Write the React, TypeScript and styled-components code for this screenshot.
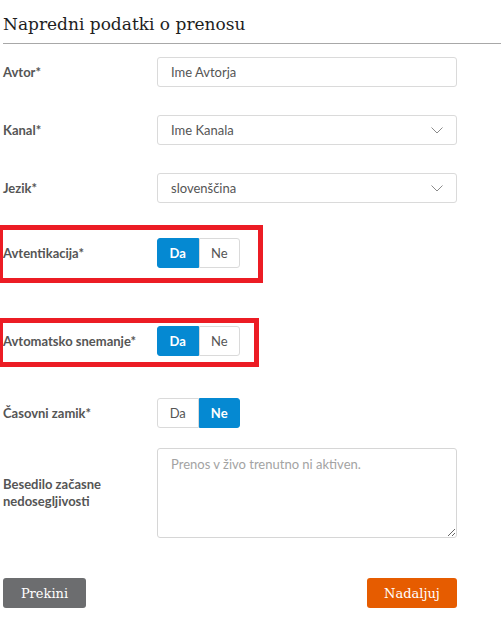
import React from 'react';
import styled, { createGlobalStyle } from 'styled-components';

const GlobalStyle = createGlobalStyle`
  body {
    margin: 0;
    background: #fff;
    font-family: "Lato", "Open Sans", sans-serif;
  }
`;

const Page = styled.div`
  padding: 14px 0 0 3px;
  width: 498px;
`;

const Title = styled.h2`
  margin: 0;
  padding-bottom: 9px;
  border-bottom: 1px solid #a8a8a8;
  font-family: "DejaVu Serif", "Liberation Serif", serif;
  font-weight: normal;
  font-size: 17px;
  line-height: 20px;
  color: #1e1e1e;
`;

const Form = styled.div`
  display: flex;
  flex-direction: column;
  padding-top: 13px;
`;

const Row = styled.div<{ $gap?: number }>`
  display: grid;
  grid-template-columns: 154px 300px;
  align-items: center;
  margin-top: ${(p) => p.$gap ?? 0}px;
`;

const Highlight = styled.div<{ $gap: number; $width: number; $pt: number; $pb: number }>`
  margin-top: ${(p) => p.$gap}px;
  margin-left: -3px;
  width: ${(p) => p.$width}px;
  box-sizing: border-box;
  border: 5px solid #ec1c24;
  border-left-width: 3px;
  padding: ${(p) => p.$pt}px 0 ${(p) => p.$pb}px 0;
`;

const Label = styled.label`
  font-weight: bold;
  font-size: 13px;
  line-height: 17px;
  color: #555;
`;

const TextInput = styled.div`
  height: 30px;
  box-sizing: border-box;
  border: 1px solid #dadada;
  border-radius: 3px;
  padding: 0 13px;
  display: flex;
  align-items: center;
  justify-content: space-between;
  font-size: 13px;
  color: #555;
`;

const Chevron = () => (
  <svg width="12" height="7" viewBox="0 0 12 7">
    <polyline points="0.5,0.5 6,6 11.5,0.5" fill="none" stroke="#8a8a8a" strokeWidth="1" />
  </svg>
);

const Toggle = styled.div`
  display: flex;
  width: 83px;
  height: 30px;
`;

const ToggleOption = styled.div<{ $active: boolean; $side: 'left' | 'right' }>`
  flex: 1;
  display: flex;
  align-items: center;
  justify-content: center;
  box-sizing: border-box;
  font-size: 13px;
  font-weight: ${(p) => (p.$active ? 'bold' : 'normal')};
  color: ${(p) => (p.$active ? '#fff' : '#555')};
  background: ${(p) => (p.$active ? '#0589d2' : '#fff')};
  border: 1px solid ${(p) => (p.$active ? '#0589d2' : '#dadada')};
  border-radius: ${(p) => (p.$side === 'left' ? '3px 0 0 3px' : '0 3px 3px 0')};
`;

const TextArea = styled.textarea`
  height: 90px;
  box-sizing: border-box;
  border: 1px solid #d6d6d6;
  border-radius: 3px;
  padding: 7px 13px;
  font-family: "Lato", sans-serif;
  font-size: 13px;
  color: #555;
  resize: vertical;
  &::placeholder {
    color: #a3a3a3;
  }
`;

const Footer = styled.div`
  display: flex;
  justify-content: space-between;
  width: 454px;
  margin-top: 40px;
`;

const Button = styled.button<{ $variant: 'cancel' | 'go' }>`
  height: 30px;
  width: ${(p) => (p.$variant === 'go' ? 90 : 83)}px;
  border: none;
  border-radius: 3px;
  background: ${(p) => (p.$variant === 'go' ? '#e65c00' : '#6c6d6f')};
  color: #fff;
  font-family: "DejaVu Serif", "Liberation Serif", serif;
  font-size: 13px;
`;

type YesNoProps = { yes: boolean };

const YesNo = ({ yes }: YesNoProps) => (
  <Toggle>
    <ToggleOption $active={yes} $side="left">Da</ToggleOption>
    <ToggleOption $active={!yes} $side="right">Ne</ToggleOption>
  </Toggle>
);

export default function App() {
  return (
    <Page>
      <GlobalStyle />
      <Title>Napredni podatki o prenosu</Title>
      <Form>
        <Row>
          <Label>Avtor*</Label>
          <TextInput>Ime Avtorja</TextInput>
        </Row>
        <Row $gap={28}>
          <Label>Kanal*</Label>
          <TextInput>
            Ime Kanala
            <Chevron />
          </TextInput>
        </Row>
        <Row $gap={28}>
          <Label>Jezik*</Label>
          <TextInput>
            slovenščina
            <Chevron />
          </TextInput>
        </Row>
        <Highlight $gap={22} $width={263} $pt={8} $pb={10}>
          <Row>
            <Label>Avtentikacija*</Label>
            <YesNo yes />
          </Row>
        </Highlight>
        <Highlight $gap={35} $width={259} $pt={3} $pb={6}>
          <Row>
            <Label>Avtomatsko snemanje*</Label>
            <YesNo yes />
          </Row>
        </Highlight>
        <Row $gap={31}>
          <Label>Časovni zamik*</Label>
          <YesNo yes={false} />
        </Row>
        <Row $gap={20}>
          <Label>
            Besedilo začasne
            <br />
            nedosegljivosti
          </Label>
          <TextArea placeholder="Prenos v živo trenutno ni aktiven." />
        </Row>
      </Form>
      <Footer>
        <Button $variant="cancel">Prekini</Button>
        <Button $variant="go">Nadaljuj</Button>
      </Footer>
    </Page>
  );
}
